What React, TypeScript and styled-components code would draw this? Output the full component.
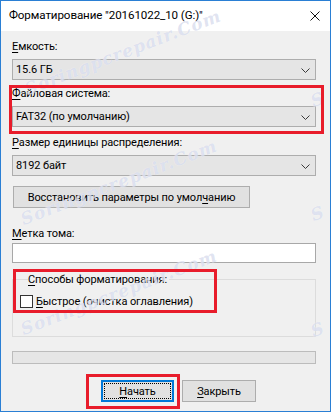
import styled, { createGlobalStyle } from "styled-components";

const GlobalStyle = createGlobalStyle`
  html, body {
    margin: 0;
    padding: 0;
    background: #ffffff;
  }
  body {
    font-family: Roboto, "Noto Sans", sans-serif;
    font-size: 11px;
    letter-spacing: -0.1px;
    color: #000;
  }
`;

const Window = styled.div`
  position: relative;
  box-sizing: border-box;
  width: 331px;
  height: 412px;
  border: 1px solid #2a7fd4;
  background: #f0f0f0;
  overflow: hidden;
  display: flex;
  flex-direction: column;
`;

const TitleBar = styled.div`
  height: 30px;
  background: #ffffff;
  display: flex;
  align-items: center;
  justify-content: space-between;
  padding: 0 10px 0 8px;
  flex-shrink: 0;
`;

const Title = styled.span`
  font-size: 11.6px;
  line-height: 15px;
  margin-top: -2px;
`;

const Body = styled.div`
  display: flex;
  flex-direction: column;
  align-items: flex-start;
  padding: 8px 14px 0 11px;
`;

const Field = styled.div<{ $mt?: number }>`
  display: flex;
  flex-direction: column;
  width: 100%;
  margin-top: ${(p) => p.$mt ?? 0}px;
`;

const Label = styled.label<{ $mb?: number }>`
  line-height: 15px;
  height: 15px;
  margin-bottom: ${(p) => p.$mb ?? 5}px;
  white-space: nowrap;
`;

const Key = styled.span`
  text-decoration: underline;
  text-underline-offset: 2px;
`;

const Combo = styled.div`
  box-sizing: border-box;
  height: 21px;
  width: 100%;
  background: #e5e5e5;
  border: 1px solid #adadad;
  display: flex;
  align-items: center;
  justify-content: space-between;
  padding: 0 5px 0 3px;
  line-height: 15px;
`;

const ChevronSvg = styled.svg`
  width: 9px;
  height: 5px;
  margin-top: 1px;
`;

const Chevron = () => (
  <ChevronSvg viewBox="0 0 9 5">
    <path d="M0.5 0.5 L4.5 4.5 L8.5 0.5" fill="none" stroke="#3a3a3a" strokeWidth="1" />
  </ChevronSvg>
);

const Button = styled.div<{ $w: number; $focus?: boolean; $ml?: number }>`
  position: relative;
  box-sizing: border-box;
  width: ${(p) => p.$w}px;
  height: 22px;
  margin-left: ${(p) => p.$ml ?? 0}px;
  background: #e1e1e1;
  border: ${(p) => (p.$focus ? "2px solid #0078d7" : "1px solid #adadad")};
  display: flex;
  align-items: center;
  justify-content: center;
  line-height: 15px;
  white-space: nowrap;
  flex-shrink: 0;
  &::before {
    content: "";
    display: ${(p) => (p.$focus ? "block" : "none")};
    position: absolute;
    inset: 1px;
    border: 1px dotted #000;
  }
`;

const TextInput = styled.div`
  box-sizing: border-box;
  height: 20px;
  width: 100%;
  background: #ffffff;
  border: 1px solid #a8a8a8;
`;

const Group = styled.fieldset`
  box-sizing: border-box;
  width: 100%;
  margin: 9px 0 0;
  padding: 0 8px 0 7px;
  min-inline-size: 0;
  height: 65px;
  border: 1px solid #dcdcdc;
`;

const Legend = styled.legend`
  padding: 0 2px 0 0;
  margin-left: 8px;
  line-height: 15px;
`;

const CheckRow = styled.div`
  display: flex;
  align-items: center;
  gap: 3px;
  margin-top: 7px;
  line-height: 15px;
`;

const CheckBox = styled.span`
  box-sizing: border-box;
  width: 13px;
  height: 13px;
  background: #ffffff;
  border: 1px solid #333333;
`;

const Progress = styled.div`
  box-sizing: border-box;
  width: 100%;
  height: 13px;
  margin-top: 14px;
  background: #e6e6e6;
  border: 1px solid #bcbcbc;
`;

const Footer = styled.div`
  display: flex;
  gap: 8px;
  margin-top: 16px;
  padding-left: 89px;
`;

const Mark = styled.div<{ $x: number; $y: number; $w: number; $h: number }>`
  position: absolute;
  box-sizing: border-box;
  left: ${(p) => p.$x}px;
  top: ${(p) => p.$y}px;
  width: ${(p) => p.$w}px;
  height: ${(p) => p.$h}px;
  border: 3px solid #e81c2b;
  pointer-events: none;
`;

const Watermark = styled.span<{ $x: number; $y: number }>`
  position: absolute;
  left: ${(p) => p.$x}px;
  top: ${(p) => p.$y}px;
  transform: rotate(-21deg);
  transform-origin: left bottom;
  font-family: "DejaVu Serif", serif;
  font-style: italic;
  font-weight: bold;
  font-size: 17px;
  letter-spacing: 1px;
  color: rgba(175, 185, 220, 0.4);
  text-shadow: 0 0 1px rgba(255, 255, 255, 0.8);
  white-space: nowrap;
  pointer-events: none;
`;

const CloseIcon = () => (
  <svg width="10" height="10" viewBox="0 0 10 10">
    <path d="M0.5 0.5 L9.5 9.5 M9.5 0.5 L0.5 9.5" stroke="#111" strokeWidth="1" />
  </svg>
);

const App = () => {
  return (
    <>
      <GlobalStyle />
      <Window>
        <TitleBar>
          <Title>Форматирование "20161022_10 (G:)"</Title>
          <CloseIcon />
        </TitleBar>
        <Body>
          <Field>
            <Label><Key>Е</Key>мкость:</Label>
            <Combo>15.6 ГБ<Chevron /></Combo>
          </Field>
          <Field $mt={6}>
            <Label><Key>Ф</Key>айловая система:</Label>
            <Combo>FAT32 (по умолчанию)<Chevron /></Combo>
          </Field>
          <Field $mt={8}>
            <Label><Key>Р</Key>азмер единицы распределения:</Label>
            <Combo>8192 байт<Chevron /></Combo>
          </Field>
          <Field $mt={10}>
            <Button $w={237} $ml={1}>
              <span>Восстановить параметры по умол<Key>ч</Key>анию</span>
            </Button>
          </Field>
          <Field $mt={18}>
            <Label $mb={2}><Key>М</Key>етка тома:</Label>
            <TextInput />
          </Field>
          <Group>
            <Legend><Key>С</Key>пособы форматирования:</Legend>
            <CheckRow>
              <CheckBox />
              <span><Key>Б</Key>ыстрое (очистка оглавления)</span>
            </CheckRow>
          </Group>
          <Progress />
          <Footer>
            <Button $w={73} $focus><span><Key>Н</Key>ачать</span></Button>
            <Button $w={74}><span><Key>З</Key>акрыть</span></Button>
          </Footer>
        </Body>
        <Watermark $x={28} $y={78}>Soringpcrepair.Com</Watermark>
        <Watermark $x={24} $y={208}>Soringpcrepair.Com</Watermark>
        <Watermark $x={24} $y={318}>Soringpcrepair.Com</Watermark>
        <Watermark $x={314} $y={90}>S</Watermark>
        <Watermark $x={314} $y={204}>S</Watermark>
        <Watermark $x={314} $y={320}>S</Watermark>
        <Mark $x={8} $y={84} $w={315} $h={49} />
        <Mark $x={12} $y={268} $w={204} $h={44} />
        <Mark $x={85} $y={373} $w={94} $h={35} />
      </Window>
    </>
  );
};

export default App;
